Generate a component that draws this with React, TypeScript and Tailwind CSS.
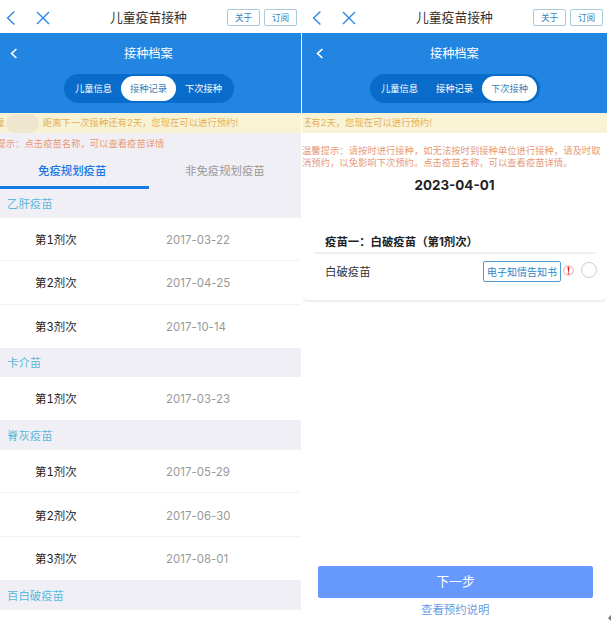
import React from "react";

const FONT = "font-['Inter','Noto_Sans_CJK_SC',sans-serif]";

function TopBar() {
  return (
    <div className="flex h-[33px] shrink-0 items-center bg-white pt-[2px]">
      <svg className="ml-[6px] h-4 w-[10px] shrink-0" viewBox="0 0 10 16" fill="none" stroke="#2b86e8" strokeWidth="1.4">
        <path d="M8.4 1.6 L1.6 8 L8.4 14.4" />
      </svg>
      <svg className="ml-[20px] h-[14px] w-[14px] shrink-0" viewBox="0 0 14 14" fill="none" stroke="#2b86e8" strokeWidth="1.4">
        <path d="M1 1 L13 13 M13 1 L1 13" />
      </svg>
      <h1 className="ml-[60px] w-[78px] shrink-0 whitespace-nowrap text-[12.8px] leading-5 text-[#333]">儿童疫苗接种</h1>
      <div className="ml-[39px] flex gap-[4px]">
        {["关于", "订阅"].map((label) => (
          <button
            key={label}
            className="flex h-[17px] w-[33px] items-center justify-center rounded-[2px] border border-[#a9cbdc] pt-px text-[8.6px] leading-none text-[#3582bd]"
          >
            {label}
          </button>
        ))}
      </div>
    </div>
  );
}

function Header({ active }: { active: number }) {
  return (
    <div className="flex h-[80px] flex-col">
      <div className="flex h-[41px] shrink-0 items-center">
        <svg className="ml-[10px] h-[11px] w-[8px] shrink-0" viewBox="0 0 8 11" fill="none" stroke="#fff" strokeWidth="1.7">
          <path d="M6.4 1 L1.6 5.5 L6.4 10" />
        </svg>
        <h2 className="ml-[106px] whitespace-nowrap pt-px text-[12.2px] leading-5 text-white">接种档案</h2>
      </div>
      <div className="ml-[64px] flex h-[29px] w-[170px] shrink-0 items-center rounded-full bg-[#0a6cca] pl-[2px]">
        {["儿童信息", "接种记录", "下次接种"].map((label, i) => (
          <div
            key={label}
            className={
              "flex h-[25px] w-[55px] shrink-0 items-center justify-center whitespace-nowrap rounded-full text-[9.3px] " +
              (i === active ? "bg-white text-[#3d7fb8]" : "text-white")
            }
          >
            {label}
          </div>
        ))}
      </div>
    </div>
  );
}

const groups = [
  { name: "乙肝疫苗", top: "h-[29px]", dates: ["2017-03-22", "2017-04-25", "2017-10-14"] },
  { name: "卡介苗", top: "h-[29px]", dates: ["2017-03-23"] },
  { name: "脊灰疫苗", top: "h-[30px]", dates: ["2017-05-29", "2017-06-30", "2017-08-01"] },
  { name: "百白破疫苗", top: "h-[30px]", dates: [] },
];

function Records() {
  return (
    <section className="flex h-full w-[301px] shrink-0 flex-col overflow-hidden bg-white">
      <TopBar />
      <div className="h-[80px] shrink-0 bg-[#2185e1]">
        <Header active={1} />
      </div>
      <div className="flex h-[20px] shrink-0 items-center overflow-hidden whitespace-nowrap bg-[#f9f3d5] text-[9.35px] text-[#e5b054]">
        <span className="-ml-[4.5px]">童</span>
        <span className="ml-[1px] h-[19px] w-[33px] shrink-0 rounded-full bg-[#efe6cf]" />
        <span className="ml-[4px]">距离下一次接种还有2天，您现在可以进行预约!</span>
      </div>
      <div className="h-[56px] shrink-0 bg-[#f0eff5]">
        <p className="-ml-[3.5px] h-[22px] whitespace-nowrap text-[9.33px] leading-[22px] text-[#eb9a73]">
          提示：点击疫苗名称，可以查看疫苗详情
        </p>
        <div className="flex h-[34px] text-[11.4px] leading-[33px]">
          <div className="w-[149px] border-b-[3px] border-[#1677e6] pl-[38px] font-medium text-[#1677e6]">免疫规划疫苗</div>
          <div className="pl-[36px] text-[#999]">非免疫规划疫苗</div>
        </div>
      </div>
      {groups.map((g) => (
        <div key={g.name} className="shrink-0">
          <div className={"flex items-center bg-[#f0eff5] pl-[7px] pt-[2px] text-[11.4px] text-[#5cb8da] " + g.top}>
            {g.name}
          </div>
          {g.dates.map((d, i) => (
            <div
              key={d}
              className={
                "flex h-[43.3px] items-center pl-[35px] pt-[3px] text-[11.4px] " +
                (i < g.dates.length - 1 ? "border-b border-[#f3f3f5]" : "")
              }
            >
              <span className="w-[131px] tabular-nums text-[#222]">第{i + 1}剂次</span>
              <span className="tracking-[0.05px] text-[#999]">{d}</span>
            </div>
          ))}
        </div>
      ))}
    </section>
  );
}

function NextVisit() {
  return (
    <section className="flex h-full w-[305px] shrink-0 flex-col overflow-hidden bg-white">
      <div className="pl-[4px]">
        <TopBar />
      </div>
      <div className="h-[80px] shrink-0 bg-[#2185e1] pl-[4px]">
        <Header active={2} />
      </div>
      <div className="h-[20px] shrink-0 bg-[#f9f3d5] pl-[3px]">
        <div className="overflow-hidden">
          <p className="-ml-[3px] whitespace-nowrap text-[9.35px] leading-[20px] text-[#e5b054]">还有2天，您现在可以进行预约!</p>
        </div>
      </div>
      <div className="h-[169px] shrink-0 rounded-b-[6px] border-b-2 border-[#efefef] pt-[12px]">
        <p className="whitespace-nowrap text-[9.33px] leading-[12.3px] text-[#e69a7a]">
          温馨提示：请按时进行接种，如无法按时到接种单位进行接种，请及时取
          <br />
          消预约，以免影响下次预约。点击疫苗名称，可以查看疫苗详情。
        </p>
        <div className="mt-[5px] h-[20px] text-center text-[13.4px] font-bold leading-[20px] text-[#222]">2023-04-01</div>
        <div className="ml-[12px] mt-[39px] h-[20px] w-[282px] border-b-2 border-[#efefef] pl-[11px] text-[11.4px] font-bold leading-[17px] text-[#222]">
          疫苗一：白破疫苗（第1剂次）
        </div>
        <div className="flex h-[36px] items-center pl-[23px] text-[11.4px] text-[#333]">
          <span className="w-[158px] pt-[2px]">白破疫苗</span>
          <span className="flex h-[21px] w-[78px] shrink-0 items-center justify-center whitespace-nowrap rounded-[2px] border border-[#4e9bd6] pt-px text-[10px] text-[#2b86cc]">
            电子知情告知书
          </span>
          <svg className="mb-[3px] ml-[2px] h-[11px] w-[11px] shrink-0" viewBox="0 0 11 11">
            <circle cx="5.5" cy="5.5" r="4.8" fill="none" stroke="#ee8888" strokeWidth="0.8" />
            <path d="M4.5 1.8 H6.5 L6 6.8 H5 Z" fill="#e02020" />
            <circle cx="5.5" cy="8.4" r="0.9" fill="#e02020" />
          </svg>
          <span className="mb-[4px] ml-[7px] h-[16px] w-[16px] shrink-0 rounded-full border border-[#cfcfcf]" />
        </div>
      </div>
      <button className="ml-[16px] mt-[264px] h-[32px] w-[275px] shrink-0 rounded-[2px] bg-[#6698fe] text-[12.8px] leading-[32px] text-white">
        下一步
      </button>
      <a className="ml-[119px] h-[24px] text-[11.4px] leading-[24px] text-[#6a9be0]">查看预约说明</a>
    </section>
  );
}

export default function App() {
  return (
    <main className={"flex h-[629px] w-[611px] overflow-hidden bg-white " + FONT}>
      <Records />
      <div className="w-px shrink-0 bg-white" />
      <NextVisit />
      <svg className="ml-px mt-[614px] h-[8px] w-[3px] shrink-0" viewBox="0 0 3 8">
        <path d="M0 4 L3 1 V7 Z" fill="#777" />
      </svg>
    </main>
  );
}
